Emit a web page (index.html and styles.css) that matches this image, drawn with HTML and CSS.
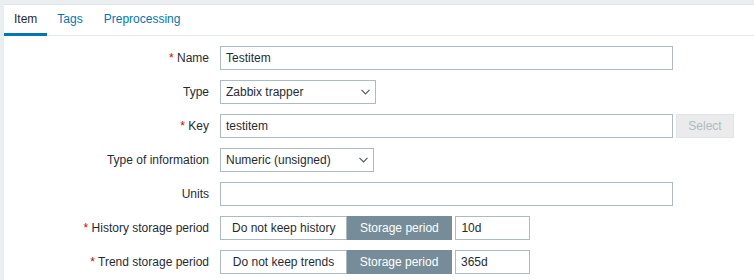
FILE: index.html
```html
<!DOCTYPE html>
<html>
<head>
<meta charset="utf-8">
<link rel="stylesheet" href="styles.css">
</head>
<body>
<div class="panel">
  <nav class="tabs">
    <span class="tab active">Item</span>
    <span class="tab">Tags</span>
    <span class="tab">Preprocessing</span>
  </nav>
  <form class="form">
    <label class="lbl"><span class="req">*</span> Name</label>
    <div class="field"><div class="input wide">Testitem</div></div>

    <label class="lbl">Type</label>
    <div class="field"><div class="select w156">Zabbix trapper<svg class="chev" width="9" height="6" viewBox="0 0 9 6"><polyline points="0.5,0.8 4.5,4.8 8.5,0.8" fill="none" stroke="#4f5b63" stroke-width="1.2"/></svg></div></div>

    <label class="lbl"><span class="req">*</span> Key</label>
    <div class="field"><div class="input wide">testitem</div><span class="btn-disabled">Select</span></div>

    <label class="lbl">Type of information</label>
    <div class="field"><div class="select w154">Numeric (unsigned)<svg class="chev" width="9" height="6" viewBox="0 0 9 6"><polyline points="0.5,0.8 4.5,4.8 8.5,0.8" fill="none" stroke="#4f5b63" stroke-width="1.2"/></svg></div></div>

    <label class="lbl">Units</label>
    <div class="field"><div class="input wide"></div></div>

    <label class="lbl"><span class="req">*</span> History storage period</label>
    <div class="field">
      <div class="seg"><span class="seg-opt first">Do not keep history</span><span class="seg-opt on">Storage period</span></div>
      <div class="input short">10d</div>
    </div>

    <label class="lbl"><span class="req">*</span> Trend storage period</label>
    <div class="field">
      <div class="seg"><span class="seg-opt first">Do not keep trends</span><span class="seg-opt on">Storage period</span></div>
      <div class="input short">365d</div>
    </div>
  </form>
</div>
</body>
</html>
```

FILE: styles.css
```css
html, body {
  margin: 0;
  padding: 0;
  background: #ebeef0;
}
body {
  padding: 4px 0 0 4px;
  font-family: "Liberation Sans", Arial, sans-serif;
  font-size: 12px;
  color: #1f2c33;
}
.panel {
  background: #ffffff;
  border-top: 1px solid #dfe4e7;
  height: 275px;
  overflow: hidden;
}
.tabs {
  display: flex;
  height: 31px;
  box-shadow: inset 0 -1px 0 #e6e9eb;
}
.tab {
  box-sizing: border-box;
  height: 31px;
  padding: 0 10px 1px;
  display: flex;
  align-items: center;
  border-bottom: 3px solid transparent;
  color: #0275b8;
}
.tab + .tab { padding-right: 11px; }
.tab.active {
  color: #1f2c33;
  border-bottom-color: #0275b8;
}
.form {
  display: grid;
  grid-template-columns: 205px 1fr;
  column-gap: 11px;
  row-gap: 10px;
  padding-top: 10px;
  align-items: center;
}
.lbl {
  text-align: right;
  white-space: nowrap;
}
.req {
  color: #d40000;
}
.field {
  display: flex;
  align-items: center;
  height: 24px;
}
.input, .select {
  box-sizing: border-box;
  height: 24px;
  border: 1px solid #acbbc2;
  padding: 0 5px;
  display: flex;
  align-items: center;
  background: #fff;
  white-space: nowrap;
}
.wide { width: 453px; }
.short { width: 75px; margin-left: 3px; }
.select { justify-content: space-between; padding-right: 5px; }
.w156 { width: 156px; }
.w154 { width: 154px; }
.chev { display: block; }
.btn-disabled {
  box-sizing: border-box;
  margin-left: 3px;
  width: 58px;
  height: 24px;
  border: 1px solid #dfe4e7;
  background: #ebebeb;
  color: #acbbc2;
  display: flex;
  align-items: center;
  justify-content: center;
}
.seg {
  display: flex;
  height: 24px;
}
.seg-opt {
  box-sizing: border-box;
  height: 24px;
  padding: 0 11px;
  display: flex;
  align-items: center;
  justify-content: center;
  border: 1px solid #acbbc2;
  white-space: nowrap;
}
.seg-opt.first { min-width: 127px; }
.seg-opt + .seg-opt { border-left: none; }
.seg-opt.on {
  min-width: 105px;
  background: #768d99;
  border-color: #768d99;
  color: #ffffff;
}
```
